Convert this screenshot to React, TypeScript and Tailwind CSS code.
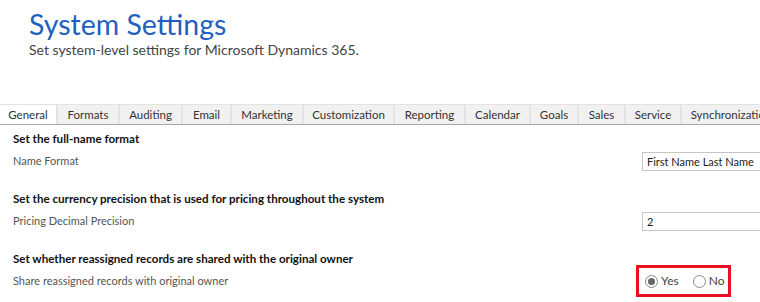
import React, { useState } from 'react';

const tabs: { label: string; w: string }[] = [
  { label: 'General', w: 'w-[58px]' },
  { label: 'Formats', w: 'w-[62px]' },
  { label: 'Auditing', w: 'w-[63px]' },
  { label: 'Email', w: 'w-[49px]' },
  { label: 'Marketing', w: 'w-[72px]' },
  { label: 'Customization', w: 'w-[91px]' },
  { label: 'Reporting', w: 'w-[71px]' },
  { label: 'Calendar', w: 'w-[65px]' },
  { label: 'Goals', w: 'w-[48px]' },
  { label: 'Sales', w: 'w-[47px]' },
  { label: 'Service', w: 'w-[56px]' },
  { label: 'Synchronization', w: 'w-[100px]' },
];

export default function App() {
  const [active, setActive] = useState('General');
  const [share, setShare] = useState(true);

  return (
    <div className="w-[760px] h-[302px] overflow-hidden bg-white font-['Segoe_UI','Lato',sans-serif]">
      {/* Header */}
      <div className="pl-[29px] pt-[6px] h-[104px]">
        <h1 className="text-[28.5px] leading-[36px] text-[#1e5fbf]">System Settings</h1>
        <p className="text-[14px] leading-[16px] text-[#444]">Set system-level settings for Microsoft Dynamics 365.</p>
      </div>

      {/* Tabs */}
      <div className="flex h-[21px] border-t border-[#e3e3e3] border-b border-b-[#a8a8a8] whitespace-nowrap">
        {tabs.map(t => (
          <button
            key={t.label}
            onClick={() => setActive(t.label)}
            className={`shrink-0 ${t.w} text-[11.5px] leading-[19px] text-[#333] border-r-2 border-[#e3e3e3] overflow-hidden ${active === t.label ? 'bg-white' : 'bg-[#f1f1f1]'}`}
          >
            {t.label}
          </button>
        ))}
      </div>

      {/* Body */}
      <div className="pl-[13px] text-[11px]">
        <div className="pt-[6px] font-bold text-[11.6px] text-[#111] leading-[16px]">Set the full-name format</div>
        <div className="flex items-center justify-between h-[23px] mt-[3px]">
          <span className="text-[#555]">Name Format</span>
          <div className="w-[130px] h-[19px] border border-[#c6c6c6] pl-[4px] text-[#222] leading-[17px] mr-[-12px] whitespace-nowrap overflow-hidden">First Name Last Name</div>
        </div>

        <div className="pt-[18px] font-bold text-[11.6px] text-[#111] leading-[16px]">Set the currency precision that is used for pricing throughout the system</div>
        <div className="flex items-center justify-between h-[23px] mt-[3px]">
          <span className="text-[#555]">Pricing Decimal Precision</span>
          <div className="w-[130px] h-[19px] border border-[#c6c6c6] pl-[4px] text-[#222] leading-[17px] mr-[-12px]">2</div>
        </div>

        <div className="pt-[18px] font-bold text-[11.6px] text-[#111] leading-[16px]">Set whether reassigned records are shared with the original owner</div>
        <div className="flex items-center h-[32px] mt-[-2px]">
          <span className="text-[#555] flex-1">Share reassigned records with original owner</span>
          <div className="flex items-center w-[95px] h-[32px] border-[3px] border-[#e81123] pl-[6px] mr-[29px] text-[12px]">
            <label className="flex items-center gap-[3px] cursor-pointer" onClick={() => setShare(true)}>
              <span className="w-[13px] h-[13px] rounded-full border border-[#888] flex items-center justify-center">
                {share && <span className="w-[7px] h-[7px] rounded-full bg-[#666]" />}
              </span>
              <span className="text-[#444]">Yes</span>
            </label>
            <label className="flex items-center gap-[3px] cursor-pointer ml-[14px]" onClick={() => setShare(false)}>
              <span className="w-[13px] h-[13px] rounded-full border border-[#888] flex items-center justify-center">
                {!share && <span className="w-[7px] h-[7px] rounded-full bg-[#666]" />}
              </span>
              <span className="text-[#444]">No</span>
            </label>
          </div>
        </div>
      </div>
    </div>
  );
}
